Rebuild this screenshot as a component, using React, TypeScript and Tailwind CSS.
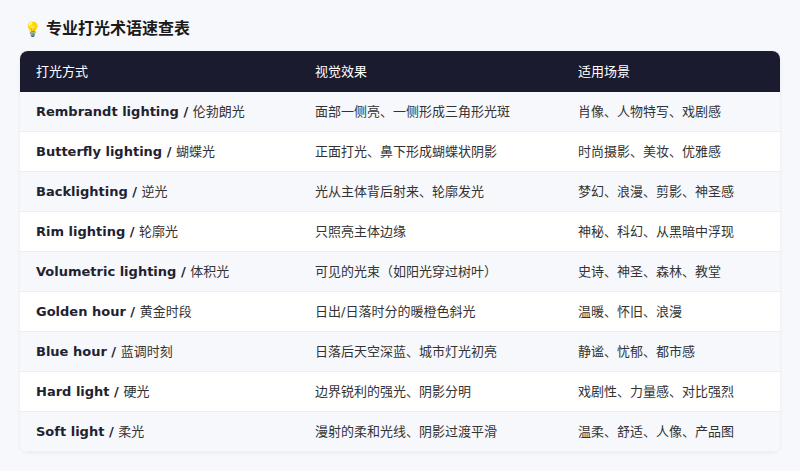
const rows = [
  ["Rembrandt lighting", "伦勃朗光", "面部一侧亮、一侧形成三角形光斑", "肖像、人物特写、戏剧感"],
  ["Butterfly lighting", "蝴蝶光", "正面打光、鼻下形成蝴蝶状阴影", "时尚摄影、美妆、优雅感"],
  ["Backlighting", "逆光", "光从主体背后射来、轮廓发光", "梦幻、浪漫、剪影、神圣感"],
  ["Rim lighting", "轮廓光", "只照亮主体边缘", "神秘、科幻、从黑暗中浮现"],
  ["Volumetric lighting", "体积光", "可见的光束（如阳光穿过树叶）", "史诗、神圣、森林、教堂"],
  ["Golden hour", "黄金时段", "日出/日落时分的暖橙色斜光", "温暖、怀旧、浪漫"],
  ["Blue hour", "蓝调时刻", "日落后天空深蓝、城市灯光初亮", "静谧、忧郁、都市感"],
  ["Hard light", "硬光", "边界锐利的强光、阴影分明", "戏剧性、力量感、对比强烈"],
  ["Soft light", "柔光", "漫射的柔和光线、阴影过渡平滑", "温柔、舒适、人像、产品图"],
];
export default function App() {
  return (
    <div className="w-[800px] h-[471px] bg-[#f7f8fb] px-5 pt-[17px] text-[#333]" style={{ fontFamily: '"DejaVu Sans","Noto Sans CJK SC",sans-serif' }}>
      <div className="flex items-center gap-[5px] h-[24px] pl-[4px] text-[16px] font-bold text-[#1a1a1a]">
        <span className="text-[14px] font-normal">💡</span>专业打光术语速查表
      </div>
      <div className="mt-[10px] rounded-lg overflow-hidden bg-white shadow-[0_1px_4px_rgba(0,0,0,0.06)]">
        <div className="grid grid-cols-[279px_263px_1fr] h-[41px] items-center bg-[#1b1b2f] text-white text-[13px] px-4">
          <div>打光方式</div><div>视觉效果</div><div>适用场景</div>
        </div>
        {rows.map((r, i) => (
          <div key={i} className={`grid grid-cols-[279px_263px_1fr] h-[40px] items-center text-[13px] px-4 border-b border-[#eceef2] ${i % 2 === 0 ? "bg-[#f7f8fc]" : "bg-white"}`}>
            <div><b className="text-[#1f2230]">{r[0]} / </b><span>{r[1]}</span></div>
            <div>{r[2]}</div>
            <div>{r[3]}</div>
          </div>
        ))}
      </div>
    </div>
  );
}
